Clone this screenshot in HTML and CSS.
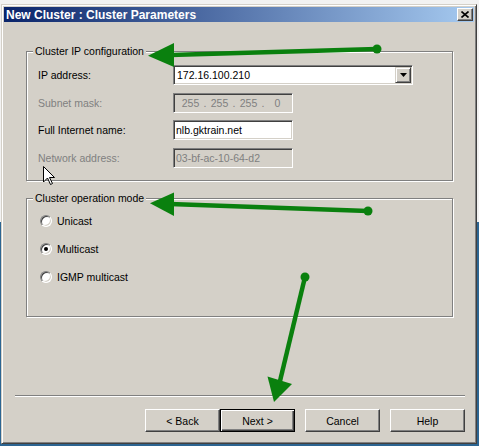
FILE: index.html
```html
<!DOCTYPE html>
<html>
<head>
  <meta charset="utf-8">
  <link rel="stylesheet" href="styles.css">
</head>
<body>
  <div class="dialog">
    <div class="titlebar">
      <span class="title">New Cluster : Cluster Parameters</span>
      <span class="close-btn">
        <svg width="8" height="7" viewBox="0 0 8 7"><path d="M0.5 0.5L7.5 6.5M7.5 0.5L0.5 6.5" stroke="#000" stroke-width="1.6"/></svg>
      </span>
    </div>

    <div class="content">
      <div class="group ip-group">
        <span class="group-label">Cluster IP configuration</span>
        <div class="form-grid">
          <span class="field-label">IP address:</span>
          <div class="combo">
            <span class="combo-value">172.16.100.210</span>
            <span class="combo-btn">
              <svg width="7" height="4" viewBox="0 0 7 4"><path d="M0 0H7L3.5 4Z" fill="#000"/></svg>
            </span>
          </div>

          <span class="field-label is-disabled">Subnet mask:</span>
          <div class="ip-field is-disabled">
            <span class="octet">255</span><span class="dot">.</span>
            <span class="octet">255</span><span class="dot">.</span>
            <span class="octet">255</span><span class="dot">.</span>
            <span class="octet">0</span>
          </div>

          <span class="field-label">Full Internet name:</span>
          <div class="text-field">nlb.gktrain.net</div>

          <span class="field-label is-disabled">Network address:</span>
          <div class="text-field is-disabled">03-bf-ac-10-64-d2</div>
        </div>
      </div>

      <div class="group mode-group">
        <span class="group-label">Cluster operation mode</span>
        <div class="radio-list">
          <div class="radio-row"><span class="radio"></span>Unicast</div>
          <div class="radio-row"><span class="radio is-checked"></span>Multicast</div>
          <div class="radio-row"><span class="radio"></span>IGMP multicast</div>
        </div>
      </div>

      <div class="separator"></div>

      <div class="button-row">
        <button class="btn">&lt; Back</button>
        <button class="btn btn-default">Next &gt;</button>
        <button class="btn btn-gap">Cancel</button>
        <button class="btn btn-gap">Help</button>
      </div>
    </div>
  </div>

  <!-- callout arrows and mouse pointer drawn on top of the dialog -->
  <svg class="overlay" width="479" height="446" viewBox="0 0 479 446">
    <g fill="#0a800e" stroke="#0a800e">
      <line x1="377" y1="49" x2="170" y2="55" stroke-width="4.5"/>
      <circle cx="377" cy="49" r="4.5" stroke="none"/>
      <polygon points="148,55.7 174,43 174,67" stroke="none"/>

      <line x1="368" y1="211" x2="170" y2="204" stroke-width="4.5"/>
      <circle cx="368" cy="211" r="4.5" stroke="none"/>
      <polygon points="150,203.3 174,192.5 174,216" stroke="none"/>

      <line x1="305" y1="277" x2="280" y2="381" stroke-width="4.5"/>
      <circle cx="305" cy="277" r="4.5" stroke="none"/>
      <polygon points="274,402 267.5,376.5 292,384" stroke="none"/>
    </g>
    <path d="M43.5 166.5V182L47.5 178L50.5 184.5L52.5 183.5L49.5 177.5H54.5Z" fill="#fff" stroke="#000" stroke-width="1"/>
  </svg>
</body>
</html>
```

FILE: styles.css
```css
body {
  margin: 0;
  width: 479px;
  height: 446px;
  overflow: hidden;
  position: relative;
  font-family: "Liberation Sans", Arial, sans-serif;
  font-size: 10.5px;
  color: #000;
  background: linear-gradient(#f2f2f2 0 222px, #2c6592 222px);
}

.dialog {
  width: 476px;
  height: 440px;
  margin: 4px 0 0 1px;
  box-sizing: border-box;
  padding: 2px;
  background: #d4d0c8;
  border: 1px solid;
  border-color: #d4d0c8 #404040 #404040 #d4d0c8;
  box-shadow: inset 1px 1px #fff, inset -1px -1px #808080;
  display: flex;
  flex-direction: column;
}

.titlebar {
  height: 15px;
  display: flex;
  align-items: center;
  justify-content: space-between;
  padding-left: 2px;
  background: linear-gradient(to right, #0a246a, #a6caf0);
  color: #fff;
  font-weight: bold;
  font-size: 12px;
}

.close-btn {
  width: 16px;
  height: 13px;
  margin-right: 1px;
  box-sizing: border-box;
  background: #d4d0c8;
  border: 1px solid;
  border-color: #fff #404040 #404040 #fff;
  box-shadow: inset -1px -1px #808080;
  display: flex;
  align-items: center;
  justify-content: center;
}

.content {
  flex: 1;
  padding: 29px 9px 0 11px;
}

/* etched group box */
.group {
  position: relative;
  margin: 0 12px 0 11px;
  box-sizing: border-box;
  border: 1px solid #808080;
  box-shadow: inset 1px 1px #fff, 1px 1px #fff;
}

.ip-group {
  height: 130px;
}

.mode-group {
  height: 119px;
  margin-top: 17px;
}

.group-label {
  position: absolute;
  top: -7px;
  left: 6px;
  padding: 0 2px;
  line-height: 13px;
  background: #d4d0c8;
}

.form-grid {
  display: grid;
  grid-template-columns: 135px auto;
  row-gap: 7.7px;
  align-items: center;
  justify-items: start;
  padding: 13px 0 0 11px;
}

.field-label {
  line-height: 20px;
}

.field-label.is-disabled {
  color: #808080;
}

/* sunken edit controls */
.combo,
.text-field,
.ip-field {
  height: 20px;
  box-sizing: border-box;
  background: #fff;
  border: 1px solid;
  border-color: #808080 #fff #fff #808080;
  box-shadow: inset 1px 1px #404040, inset -1px -1px #d4d0c8;
}

.combo {
  width: 240px;
  padding: 1px;
  display: flex;
  align-items: center;
}

.combo-value {
  flex: 1;
  padding-left: 2px;
}

.combo-btn {
  width: 16px;
  height: 16px;
  box-sizing: border-box;
  background: #d4d0c8;
  border: 1px solid;
  border-color: #d4d0c8 #404040 #404040 #d4d0c8;
  box-shadow: inset 1px 1px #fff, inset -1px -1px #808080;
  display: flex;
  align-items: center;
  justify-content: center;
}

.text-field {
  width: 120px;
  padding: 0 2px;
  line-height: 18px;
}

.ip-field {
  width: 120px;
  padding-left: 5px;
  display: flex;
  align-items: center;
}

.octet {
  width: 23px;
  text-align: center;
}

.dot {
  width: 6px;
  text-align: center;
}

.text-field.is-disabled,
.ip-field.is-disabled {
  background: #d4d0c8;
  color: #808080;
}

.radio-list {
  display: flex;
  flex-direction: column;
  gap: 8px;
  padding: 12px 0 0 13px;
}

.radio-row {
  height: 20px;
  display: flex;
  align-items: center;
  gap: 5px;
}

.radio {
  width: 12px;
  height: 12px;
  box-sizing: border-box;
  border-radius: 50%;
  background: #fff;
  border: 1px solid;
  border-color: #808080 #fff #fff #808080;
  box-shadow: inset 1px 1px #404040, inset -1px -1px #d4d0c8;
  display: flex;
  align-items: center;
  justify-content: center;
}

.radio.is-checked::after {
  content: "";
  width: 4px;
  height: 4px;
  border-radius: 50%;
  background: #000;
}

.separator {
  margin-top: 78px;
  border-top: 1px solid #808080;
  border-bottom: 1px solid #fff;
}

.button-row {
  display: flex;
  justify-content: flex-end;
  margin-top: 12px;
}

.btn {
  width: 75px;
  height: 23px;
  box-sizing: border-box;
  padding: 0;
  font: inherit;
  color: #000;
  background: #d4d0c8;
  border: 1px solid;
  border-color: #fff #404040 #404040 #fff;
  box-shadow: inset -1px -1px #808080;
}

.btn-default {
  border-color: #000;
  box-shadow: inset 1px 1px #fff, inset -1px -1px #404040, inset -2px -2px #808080;
}

.btn-gap {
  margin-left: 10px;
}

.overlay {
  position: absolute;
  top: 0;
  left: 0;
  pointer-events: none;
}
```
